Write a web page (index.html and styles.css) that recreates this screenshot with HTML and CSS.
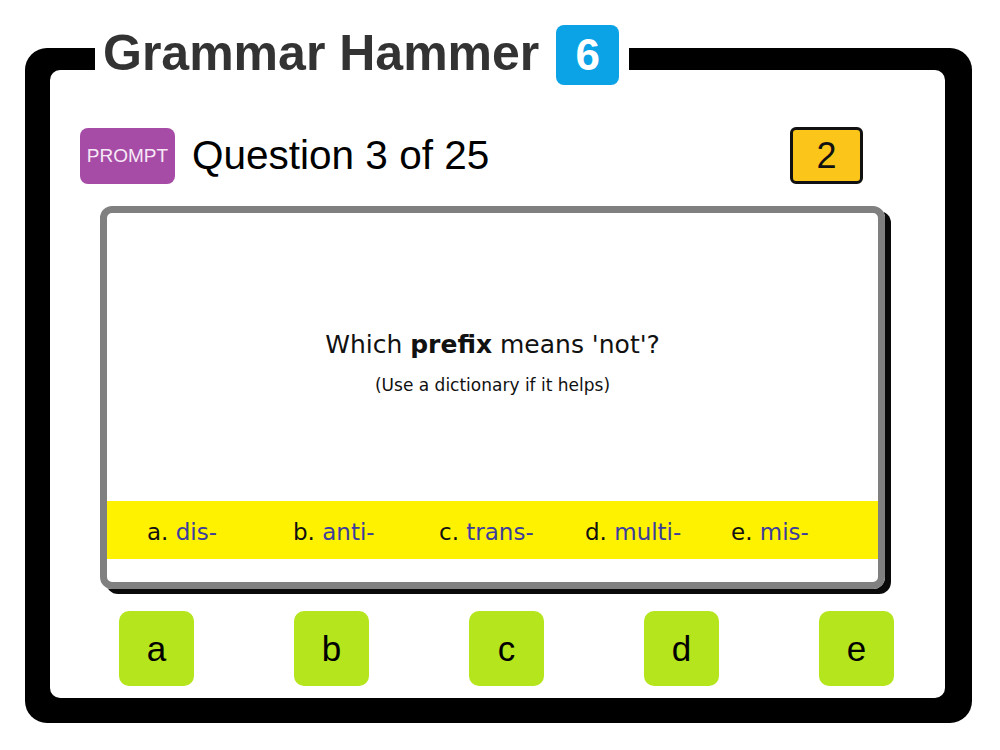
FILE: index.html
```html
<!DOCTYPE html>
<html lang="en">
<head>
<meta charset="UTF-8">
<title>Grammar Hammer</title>
<link rel="stylesheet" href="styles.css">
</head>
<body>

<div class="game-frame">
    <!-- title sits over the top edge of the frame -->
    <div class="game-title">
        <h1>Grammar Hammer</h1>
        <span class="level-badge">6</span>
    </div>

    <div class="game-panel">
        <div class="question-head">
            <button class="prompt-btn">PROMPT</button>
            <span class="question-count">Question 3 of 25</span>
            <span class="score-box">2</span>
        </div>

        <div class="question-card">
            <div class="question-body">
                <p class="question-text">Which <b>prefix</b> means 'not'?</p>
                <p class="question-hint">(Use a dictionary if it helps)</p>
            </div>
            <div class="option-band">
                <span class="option">a. <em>dis-</em></span>
                <span class="option">b. <em>anti-</em></span>
                <span class="option">c. <em>trans-</em></span>
                <span class="option">d. <em>multi-</em></span>
                <span class="option">e. <em>mis-</em></span>
            </div>
        </div>

        <div class="answer-row">
            <button class="answer-btn">a</button>
            <button class="answer-btn">b</button>
            <button class="answer-btn">c</button>
            <button class="answer-btn">d</button>
            <button class="answer-btn">e</button>
        </div>
    </div>
</div>

</body>
</html>
```

FILE: styles.css
```css
/* --- page --- */
body {
    margin: 0;
    background: #fff;
    font-family: "Liberation Sans", Arial, sans-serif;
}

/* --- black outer frame --- */
.game-frame {
    position: relative;
    box-sizing: border-box;
    width: 947px;
    margin: 48px 0 0 25px;
    padding: 22px 27px 25px 25px;
    background: #000;
    border-radius: 22px;
}

.game-title {
    position: absolute;
    top: -28px;
    left: 70px;
    height: 50px;
    display: flex;
    align-items: flex-start;
    gap: 17px;
    padding: 0 10px 0 8px;
    background: #fff;
}

.game-title h1 {
    margin: 8px 0 0;
    font-size: 50px;
    line-height: 50px;
    font-weight: bold;
    color: #333;
}

.level-badge {
    display: flex;
    align-items: center;
    justify-content: center;
    width: 63px;
    height: 60px;
    margin-top: 5px;
    border-radius: 8px;
    background: #0ba3e6;
    color: #fff;
    font-size: 44px;
    font-weight: bold;
}

/* --- white panel --- */
.game-panel {
    background: #fff;
    border-radius: 10px;
    padding: 57px 0 12px;
}

.question-head {
    display: flex;
    align-items: center;
    height: 57px;
    padding: 0 82px 0 30px;
}

.prompt-btn {
    width: 95px;
    height: 56px;
    border: none;
    border-radius: 8px;
    background: #a64ca6;
    color: #f6e8f6;
    font-family: "Liberation Sans", Arial, sans-serif;
    font-size: 19px;
    padding: 0;
}

.question-count {
    margin-left: 17px;
    font-size: 40.5px;
    color: #000;
}

.score-box {
    margin-left: auto;
    box-sizing: border-box;
    width: 73px;
    height: 57px;
    display: flex;
    align-items: center;
    justify-content: center;
    border: 3px solid #111;
    border-radius: 6px;
    background: #fcc51a;
    font-size: 36px;
    color: #111;
}

/* --- question card --- */
.question-card {
    box-sizing: border-box;
    width: 785px;
    height: 383px;
    margin: 22px 0 0 50px;
    border: 7px solid #808080;
    border-radius: 12px;
    box-shadow: 6px 5px 0 #0a0a0a;
    display: flex;
    flex-direction: column;
    padding-bottom: 23px;
    font-family: "Comic Sans MS", "DejaVu Sans", sans-serif;
}

.question-body {
    flex: 1;
    text-align: center;
    padding-top: 117px;
}

.question-text {
    margin: 0;
    font-size: 25px;
    line-height: 30px;
    color: #111;
}

.question-hint {
    margin: 14px 0 0;
    font-size: 17px;
    line-height: 22px;
    color: #111;
}

.option-band {
    display: flex;
    align-items: center;
    height: 58px;
    padding-left: 40px;
    background: #fff200;
}

.option {
    width: 146px;
    font-size: 23px;
    line-height: 30px;
    padding-top: 3px;
    color: #111;
}

.option em {
    font-style: normal;
    color: #3d3d9e;
}

/* --- answer buttons --- */
.answer-row {
    display: flex;
    justify-content: space-between;
    margin-top: 22px;
    padding: 0 51px 0 69px;
}

.answer-btn {
    width: 75px;
    height: 75px;
    padding: 0;
    border: none;
    border-radius: 10px;
    background: #b5e51d;
    color: #000;
    font-family: "Liberation Sans", Arial, sans-serif;
    font-size: 35px;
}
```
